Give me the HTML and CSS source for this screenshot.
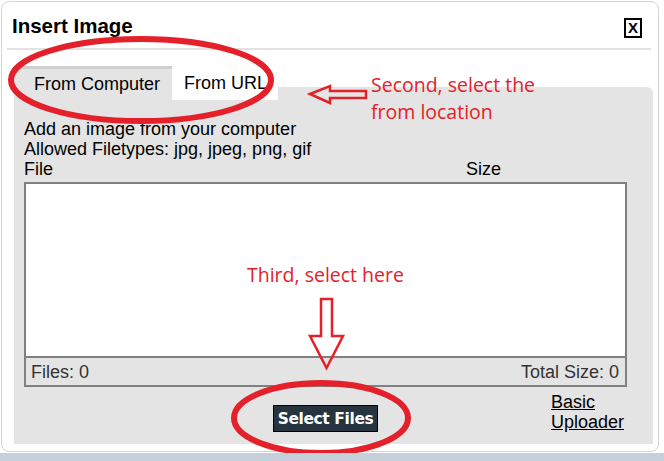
FILE: index.html
```html
<!DOCTYPE html>
<html lang="en">

<head>
    <meta charset="UTF-8">
    <meta name="viewport" content="width=device-width, initial-scale=1.0">
    <title>Insert Image</title>
    <link rel="stylesheet" href="styles.css">
</head>

<body>
    <div class="dialog">
        <header class="dialog-header">
            <h1>Insert Image</h1>
            <span class="close">X</span>
        </header>

        <div class="tabs">
            <span class="tab tab-active">From Computer</span>
            <span class="tab tab-url">From URL</span>
        </div>

        <section class="panel">
            <p>Add an image from your computer</p>
            <p>Allowed Filetypes: jpg, jpeg, png, gif</p>
            <div class="cols">
                <span class="col-file">File</span>
                <span>Size</span>
            </div>
            <div class="filelist">
                <div class="filelist-body"></div>
                <div class="filelist-foot">
                    <span>Files: 0</span>
                    <span>Total Size: 0</span>
                </div>
            </div>
            <div class="actions">
                <span></span>
                <button class="select-btn">Select Files</button>
                <a class="basic-link" href="#">Basic<br>Uploader</a>
            </div>
        </section>

        <!-- annotations drawn over the dialog -->
        <svg class="marks" width="664" height="461" viewBox="0 0 664 461">
            <g fill="none" stroke="#e4202a">
                <ellipse cx="141" cy="80" rx="130" ry="41" stroke-width="6" />
                <ellipse cx="321" cy="418" rx="87" ry="35" stroke-width="6" />
                <path d="M310 94 L330 86 L330 91 L366 91 L366 98 L330 98 L330 103 Z" stroke-width="2.5" />
                <path d="M321 299 L332 299 L332 336 L343 336 L326.5 368 L310 336 L321 336 Z" stroke-width="2.5" />
            </g>
        </svg>
        <div class="note note-second">Second, select the<br>from location</div>
        <div class="note note-third">Third, select here</div>
    </div>
    <div class="bottom-strip"></div>
</body>

</html>
```

FILE: styles.css
```css
body {
    margin: 0;
    width: 664px;
    height: 461px;
    overflow: hidden;
    background-color: #ffffff;
    font-family: 'Liberation Sans', Arial, sans-serif;
    font-size: 18px;
    color: #000;
    position: relative;
}

.dialog {
    box-sizing: border-box;
    margin: 1px 0 0 1px;
    width: 658px;
    height: 451px;
    border: 1px solid #d4d4d4;
    border-radius: 8px;
    background: #fff;
}

.dialog-header {
    display: flex;
    justify-content: space-between;
    align-items: center;
    height: 46px;
    margin: 0 7px 0 5px;
    padding: 0 9px 0 5px;
    border-bottom: 2px solid #e2e2e2;
}

.dialog-header h1 {
    margin: 0;
    font-size: 20.5px;
    font-weight: bold;
    padding-top: 2px;
}

.close {
    box-sizing: border-box;
    width: 18px;
    height: 20px;
    border: 2px solid #000;
    font-size: 15px;
    font-weight: bold;
    text-align: center;
    line-height: 16px;
    margin-top: 6px;
}

.tabs {
    display: flex;
    margin: 16px 0 -13px 12px;
    position: relative;
}

.tab {
    box-sizing: border-box;
    height: 34px;
    line-height: 34px;
    padding: 0 10px 0 20px;
    font-size: 18px;
    white-space: nowrap;
}

.tab-active {
    width: 158px;
    background: #e4e4e4;
    border-top: 3px solid #cfcfcf;
    line-height: 30px;
}

.tab-url {
    width: 106px;
    background: #fff;
    padding-left: 12px;
}

.panel {
    box-sizing: border-box;
    margin: 0 5px 0 12px;
    height: 357px;
    padding: 32px 24px 0 10px;
    background: #e4e4e4;
    border-radius: 0 6px 0 0;
}

.panel p {
    margin: 0;
    line-height: 20px;
}

.cols {
    display: flex;
    line-height: 20px;
}

.col-file {
    width: 442px;
}

.filelist {
    margin-top: 3px;
    border: 2px solid #808080;
    width: 603px;
    box-sizing: border-box;
}

.filelist-body {
    height: 172px;
    background: #fff;
    border-bottom: 2px solid #808080;
}

.filelist-foot {
    display: flex;
    justify-content: space-between;
    height: 27px;
    line-height: 28px;
    padding: 0 6px 0 5px;
    color: #333;
}

.actions {
    display: grid;
    grid-template-columns: 1fr auto 1fr;
    align-items: start;
    width: 603px;
}

.select-btn {
    margin-top: 18px;
    height: 27px;
    padding: 0 4px;
    border: 1px solid #000;
    background: #263440;
    color: #fff;
    font-family: 'DejaVu Sans', sans-serif;
    font-weight: bold;
    font-size: 15.5px;
    letter-spacing: -0.4px;
}

.basic-link {
    justify-self: end;
    margin-right: 4px;
    margin-top: 5px;
    color: #000;
    line-height: 20px;
    width: 72px;
}

.marks {
    position: absolute;
    left: 0;
    top: 0;
    pointer-events: none;
}

.note {
    position: absolute;
    color: #e4202a;
    font-family: 'Open Sans', 'Noto Sans', sans-serif;
    font-size: 19.5px;
    line-height: 27px;
}

.note-second {
    left: 371px;
    top: 71px;
}

.note-third {
    left: 247px;
    top: 261px;
}

.bottom-strip {
    position: absolute;
    left: 0;
    bottom: 0;
    width: 664px;
    height: 8px;
    background: #c6d0da;
}
```
